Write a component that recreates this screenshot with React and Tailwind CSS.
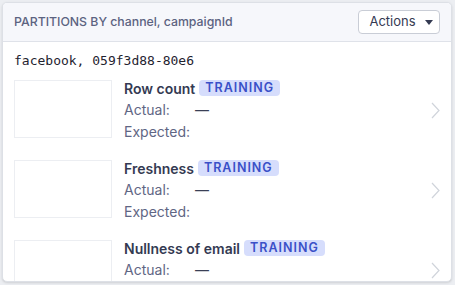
const checks = [
  { name: "Row count" },
  { name: "Freshness" },
  { name: "Nullness of email" },
];

const CheckRow = ({ check }) => {
  return (
    <div className="flex h-20 items-start shrink-0">
      <div className="h-[58px] w-[98px] shrink-0 border border-[#eceef2] bg-white" />
      <div className="ml-[12px] flex flex-1 flex-col">
        <div className="flex h-[16px] items-center gap-[4px]">
          <span className="text-[14px] font-semibold text-[#343a52]">{check.name}</span>
          <span className="rounded-[4px] bg-[#d6ddfc] px-[6px] text-[12.5px] leading-[16px] font-semibold tracking-[1px] text-[#3a50c8]">
            TRAINING
          </span>
        </div>
        <div className="mt-[2px] flex h-[22px] items-center text-[14px] text-[#5f6684]">
          <span className="w-[71px]">Actual:</span>
          <span className="text-[#3a3f55]">—</span>
        </div>
        <div className="flex h-[22px] items-center text-[14px] text-[#5f6684]">Expected:</div>
      </div>
      <svg className="mt-[22px] shrink-0" width="9" height="17" viewBox="0 0 9 17">
        <polyline points="1,1 8,8.5 1,16" fill="none" stroke="#d0d4db" strokeWidth="1.2" />
      </svg>
    </div>
  );
};

export default function App() {
  return (
    <div className="h-[285px] w-[455px] bg-[#eceef2] p-[2px] font-['Inter',sans-serif]">
      <div className="flex h-[280px] w-[450px] flex-col overflow-hidden rounded-[5px] border border-[#dde0e6] bg-white shadow-sm">
        <div className="flex h-[39px] shrink-0 items-center justify-between border-b border-[#dfe2e9] bg-[#f6f7fb] pl-[11px] pr-[11px]">
          <span className="text-[12.3px] font-medium text-[#5c6381]">PARTITIONS BY channel, campaignId</span>
          <button className="flex h-[24px] w-[82px] items-center justify-center gap-[9px] rounded-[4px] border border-[#c9cdd6] bg-white pl-[4px] text-[13px] text-[#343a52]">
            Actions
            <svg width="8" height="5" viewBox="0 0 8 5">
              <path d="M0 0h8L4 5z" fill="#343a52" />
            </svg>
          </button>
        </div>
        <div className="flex flex-col px-[11px]">
          <div className="flex h-[38px] shrink-0 items-center font-['DejaVu_Sans_Mono',monospace] text-[13px] text-[#1f2330]">
            facebook, 059f3d88-80e6
          </div>
          {checks.map((check) => (
            <CheckRow key={check.name} check={check} />
          ))}
        </div>
      </div>
    </div>
  );
}
